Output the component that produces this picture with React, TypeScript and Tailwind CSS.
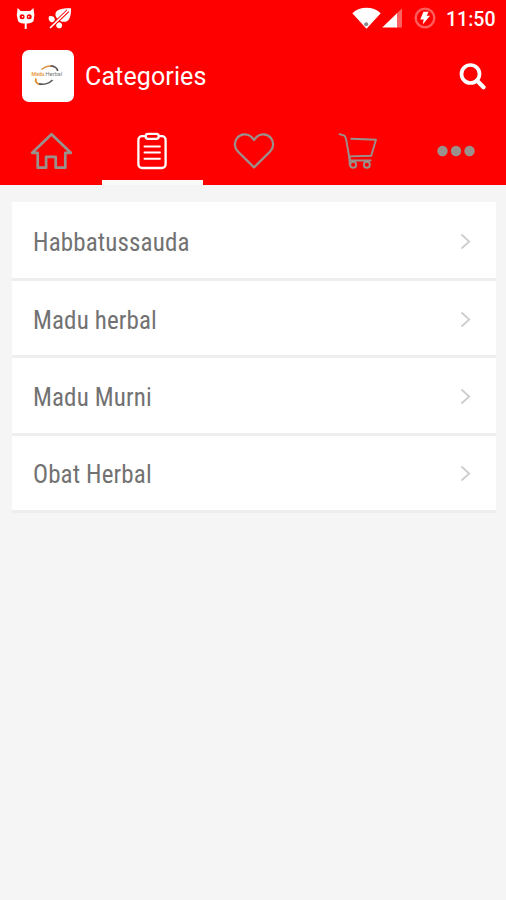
import React, { memo, useState } from "react";

interface Tab {
  id: string;
  icon: React.ReactNode;
}

const categories: string[] = [
  "Habbatussauda",
  "Madu herbal",
  "Madu Murni",
  "Obat Herbal",
];

const HomeIcon = () => (
  <svg width="42" height="38" viewBox="0 0 42 38" fill="none" stroke="currentColor" strokeWidth="2.7" strokeLinejoin="round">
    <path d="M21.500 2.200 2.200 20.800h5.500v14.900h8.400V24.800h9.600v10.900h9.600V20.800h5.500z" />
  </svg>
);

const ClipboardIcon = () => (
  <svg width="30" height="38" viewBox="0 0 30 38" fill="none" stroke="currentColor" strokeWidth="2.3" strokeLinecap="round">
    <path d="M8 4.2H5a3.600 3.600 0 0 0-3.600 3.600v24.600A3.600 3.600 0 0 0 5 36h20a3.600 3.600 0 0 0 3.600-3.600V7.800A3.600 3.600 0 0 0 25 4.200h-3" />
    <path d="M11 1.900h8.400a2.300 2.300 0 0 1 2.300 2.300v.4a2.300 2.300 0 0 1-2.300 2.300H11a2.300 2.300 0 0 1-2.300-2.300v-.4A2.300 2.300 0 0 1 11 1.900z" />
    <path d="M7.500 14.400h15.400M7.500 20.400h15.400M7.500 26.800h15.400" strokeWidth="2" />
  </svg>
);

const HeartIcon = () => (
  <svg width="42" height="38" viewBox="0 0 42 38" fill="none" stroke="currentColor" strokeWidth="2.2" strokeLinejoin="round">
    <path d="M21 35.400 4.900 19.500C1.200 15.800.9 9.900 4.100 6 7.900 1.400 14.600 1.300 18.500 5L21 8l2.500-3c3.900-3.700 10.600-3.600 14.400 1 3.200 3.900 2.900 9.800-.8 13.500z" />
  </svg>
);

const CartIcon = () => (
  <svg className="ml-1" width="40" height="38" viewBox="0 0 40 38" fill="none" stroke="currentColor" strokeWidth="1.9" strokeLinejoin="round" strokeLinecap="round">
    <path d="M1.500 2.200 6.500 3.700l1.500 3L11.800 28.500h20.800" />
    <path d="M13.200 6.800 38 7.700 33.200 23.700 11.500 24.400" />
    <circle cx="15.200" cy="32.800" r="3" />
    <circle cx="28.800" cy="32.800" r="3" />
    <path d="M11.600 24.500v8" />
  </svg>
);

const DotsIcon = () => (
  <svg className="mr-[2px]" width="38" height="12" viewBox="0 0 38 12" fill="currentColor">
    <circle cx="5.5" cy="6" r="5.2" />
    <circle cx="19" cy="6" r="5.2" />
    <circle cx="32.5" cy="6" r="5.2" />
  </svg>
);

const tabs: Tab[] = [
  { id: "home", icon: <HomeIcon /> },
  { id: "categories", icon: <ClipboardIcon /> },
  { id: "wishlist", icon: <HeartIcon /> },
  { id: "cart", icon: <CartIcon /> },
  { id: "more", icon: <DotsIcon /> },
];

const StatusBar = memo(() => (
  <div className="flex h-9 items-center pr-[10px] pl-4 text-white">
    <svg width="20" height="24" viewBox="0 0 20 24">
      <path fill="#fff" fillRule="evenodd" d="M1.600 2 4.800 5h9.400L17.400 2l1 7-.9 6.300c-2.200 2-5.100 2.300-7.900 2.300s-5.700-.3-7.500-2.300L.8 9zM6.100 8.200a2.500 2.500 0 1 0 0 5 2.500 2.500 0 1 0 0-5zM13.200 8.200a2.500 2.500 0 1 0 0 5 2.500 2.500 0 1 0 0-5z" />
      <path stroke="#fff" strokeWidth="2" d="M9.700 17v6" />
      <circle cx="6.500" cy="10.800" r=".8" fill="#fff" />
      <circle cx="12.800" cy="10.800" r=".8" fill="#fff" />
    </svg>
    <svg className="ml-3" width="24" height="24" viewBox="0 0 24 24">
      <path fill="#fff" d="M7.500 7.500C8.500 3.400 14 2 23 2.200c.3 5.600-1 11.900-4.500 13.200-3 1.200-7-.2-9-2.400C7.900 11.200 7.100 9.200 7.500 7.500z" />
      <path fill="#fff" d="M1 10.400c2.500-.9 5.700.3 5.800 2.900.1 2.300-2.200 3.500-4 2.600C1 15 0 12.200 1 10.400zM9.300 16.500c2.600-.9 5 .4 4.800 3.200-.1 2.200-2.300 3.100-4.300 2.300-2-.7-2.100-4.200-.5-5.500z" />
      <path stroke="#f00" strokeWidth="3.600" d="M2.500 21.500 20 4.700" />
      <path stroke="#fff" strokeWidth="1.600" d="M2 22 21.500 3.200" />
    </svg>

    <svg className="ml-auto" width="29" height="22" viewBox="0 0 29 22">
      <path fill="#fff" d="M.3 6.200C8-1 21-1 28.700 6.200L14.500 21.700z" />
      <circle cx="14.200" cy="17.200" r="2" fill="#888" />
    </svg>
    <svg className="ml-[1px]" width="21" height="20" viewBox="0 0 21 20">
      <path fill="#ff6262" d="M20 .5v19h-6V6z" />
      <path fill="#fff" d="M15 5.200v14.300H.2z" />
    </svg>
    <svg className="ml-[11px]" width="22" height="22" viewBox="0 0 22 22">
      <circle cx="11" cy="11" r="9.300" fill="none" stroke="#ff5c5c" strokeWidth="2.400" />
      <path fill="#fff" d="M9.400 4.800h5.200l-1.900 3.900h3.300L8.700 17.400l1-5H6.300z" />
    </svg>
    <span className="ml-[10px] w-[50px] pt-[3px] text-[19.5px] leading-none font-medium">
      11:50
    </span>
  </div>
));

const Logo = memo(() => (
  <div className="flex size-[52px] items-center justify-center rounded-[7px] bg-white">
    <svg width="34" height="26" viewBox="0 0 34 26" fill="none">
      <path d="M10.500 6.500C14.500 2.900 20 2 23.500 4" stroke="#dc9146" strokeWidth="1.500" />
      <path d="M19.500 3c3.500 0 6.500 1.600 7.300 5" stroke="#55525a" strokeWidth="1.700" />
      <path d="M5 15.500c-1 3.500.6 5.300 4.500 5.800" stroke="#df8c32" strokeWidth="1.900" />
      <path d="M8 20.700c5 1.400 10.500-.4 13.500-3.700" stroke="#55525a" strokeWidth="1.500" />
      <text x=".5" y="13.200" fontSize="5" fontWeight="700" fill="#eda04c" textLength="13" lengthAdjust="spacingAndGlyphs">Madu</text>
      <text x="14.500" y="13.200" fontSize="5" fill="#77777c" textLength="16.500" lengthAdjust="spacingAndGlyphs">Herbal</text>
    </svg>
  </div>
));

const CategoryRow = memo(({ name }: { name: string }) => (
  <li className="flex h-[77.4px] items-center justify-between border-b-[3px] border-[#eeeeee] bg-white pr-[25px] pl-[21px]">
    <span className="pt-1 font-['Roboto_Condensed',Roboto,sans-serif] text-[25px] leading-none tracking-[0.13px] text-[#727272]">
      {name}
    </span>
    <svg className="mt-[2px]" width="11" height="17" viewBox="0 0 11 17" fill="none" stroke="#cdcdcd" strokeWidth="1.8">
      <path d="m1.500 1.500 7.700 7-7.700 7" />
    </svg>
  </li>
));

const App = () => {
  const [active, setActive] = useState("categories");

  return (
    <div className="min-h-screen w-full overflow-hidden bg-[#f5f5f5] font-[Roboto,sans-serif]">
      <header className="bg-[#ff0000]">
        <StatusBar />

        {/* Title bar */}
        <div className="flex h-20 items-center pr-5 pl-[22px] text-white">
          <Logo />
          <h1 className="ml-[11px] text-[25px] leading-none tracking-[0.12px]">
            Categories
          </h1>
          <button className="ml-auto" aria-label="Search">
            <svg width="27" height="27" viewBox="0 0 27 27" fill="none" stroke="currentColor">
              <circle cx="11.500" cy="11" r="9" strokeWidth="3.700" />
              <path d="m18 17.500 6.500 6.700" strokeWidth="4.200" strokeLinecap="round" />
            </svg>
          </button>
        </div>

        <nav className="grid h-[69px] w-[508px] grid-cols-5">
          {tabs.map((tab) => (
            <button
              key={tab.id}
              aria-label={tab.id}
              onClick={() => setActive(tab.id)}
              className={`flex items-center justify-center border-b-[5px] pt-[5px] ${
                active === tab.id
                  ? "border-[#f9f9f9] text-white"
                  : "border-transparent text-[#9a918d]"
              }`}
            >
              {tab.icon}
            </button>
          ))}
        </nav>
      </header>

      <ul className="mt-[17px] mr-[10px] ml-3 bg-white pt-[1.5px]">
        {categories.map((name) => (
          <CategoryRow key={name} name={name} />
        ))}
      </ul>
    </div>
  );
};

export default App;
